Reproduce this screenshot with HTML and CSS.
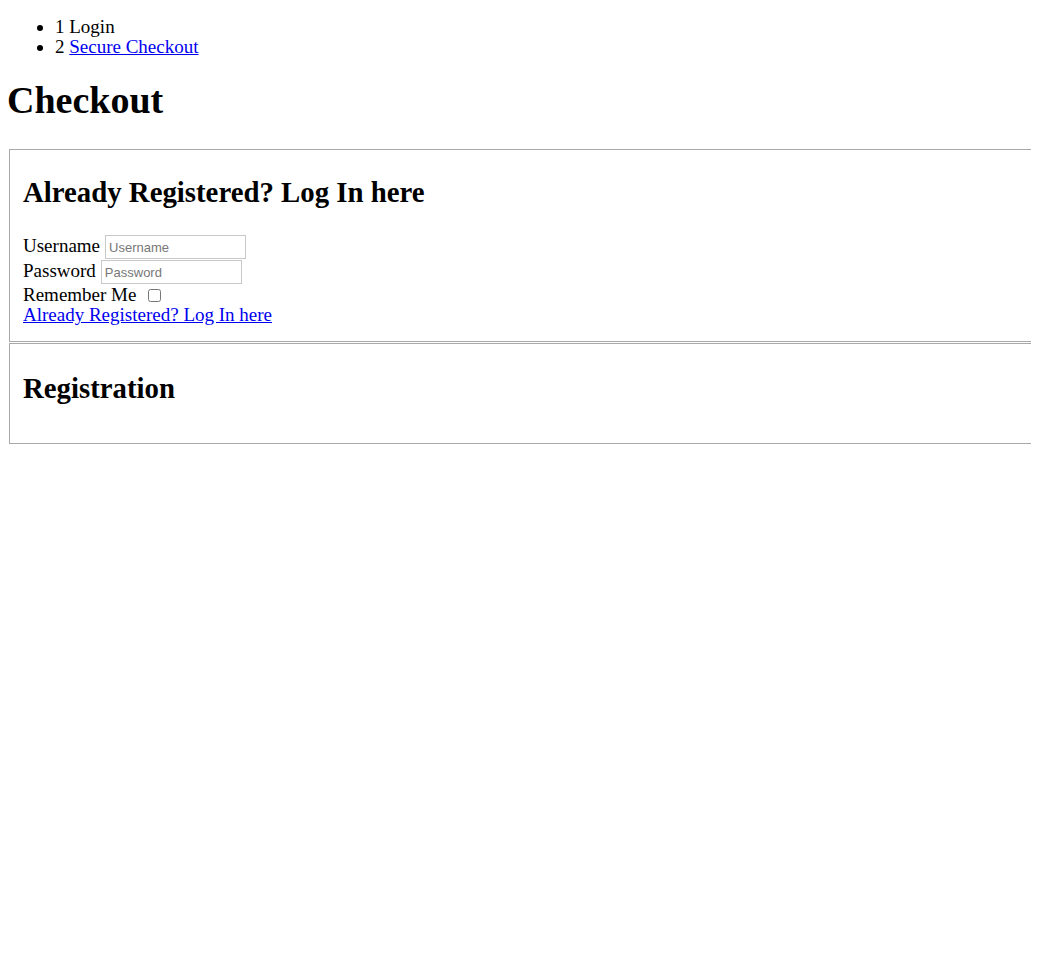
FILE: index.html
```html
<!DOCTYPE html>
<html lang="en">
<head>
    <meta charset="UTF-8">
    <meta name="viewport" content="width=device-width, initial-scale=1.0">
    <title>Checkout</title>
    <link rel="stylesheet" href="styles.css">
</head>
<body>
    <ul class="steps">
        <li>1 Login</li>
        <li>2 <a href="#">Secure Checkout</a></li>
    </ul>

    <h1 class="page-title">Checkout</h1>

    <fieldset class="panel panel-login">
        <h2 class="panel-title">Already Registered? Log In here</h2>
        <form class="login-form" onsubmit="return false;">
            <div class="form-row">
                <label for="username">Username</label>
                <input type="text" id="username" class="text-field" placeholder="Username">
            </div>
            <div class="form-row">
                <label for="password">Password</label>
                <input type="password" id="password" class="text-field" placeholder="Password">
            </div>
            <div class="form-row form-row-check">
                <label for="remember">Remember Me</label>
                <input type="checkbox" id="remember" class="check-field">
            </div>
            <div class="form-link">
                <a href="#">Already Registered? Log In here</a>
            </div>
        </form>
    </fieldset>

    <fieldset class="panel panel-register">
        <h2 class="panel-title">Registration</h2>
    </fieldset>
</body>
</html>
```

FILE: styles.css
```css
body {
    margin: 0 8px 8px;
    padding-top: 17px;
    font-family: "Liberation Serif", "Times New Roman", serif;
    font-size: 19px;
    line-height: 20px;
    color: #000;
    background: #fff;
}
a {
    color: #0000ee;
    text-decoration: underline;
}
.steps {
    margin: 0;
    padding-left: 47px;
}
.page-title {
    font-size: 38px;
    line-height: 44px;
    font-weight: bold;
    margin: 21px 0 27px -1px;
}
/* panels run off the right edge of the window, so no right border shows */
.panel {
    margin: 0 -8px 0 1px;
    padding: 6px 13px 16px;
    border: 1px solid #a9a9a9;
    border-right: 0;
    min-width: 0;
}
.panel-title {
    font-size: 28.8px;
    line-height: 32px;
    font-weight: bold;
    margin: 20px 0 27px;
}
.panel-register {
    margin-top: 1px;
    padding-bottom: 12px;
}
.panel-register .panel-title {
    margin-top: 22px;
    margin-bottom: 27px;
}
.login-form {
    margin: 0;
}
.form-row {
    display: flex;
    align-items: baseline;
    gap: 5px;
    height: 25px;
}
.form-row-check {
    align-items: center;
    height: 20px;
    gap: 0;
}
.text-field {
    box-sizing: border-box;
    width: 141px;
    height: 24px;
    margin: 0;
    padding: 1px 3px;
    border: 1px solid #c8c8c8;
    font-family: "Liberation Sans", Arial, sans-serif;
    font-size: 13px;
    color: #000;
}
.text-field::placeholder {
    color: #777;
}
.check-field {
    width: 13px;
    height: 13px;
    margin: 1px 0 0 12px;
}
.form-link {
    line-height: 20px;
}
```
